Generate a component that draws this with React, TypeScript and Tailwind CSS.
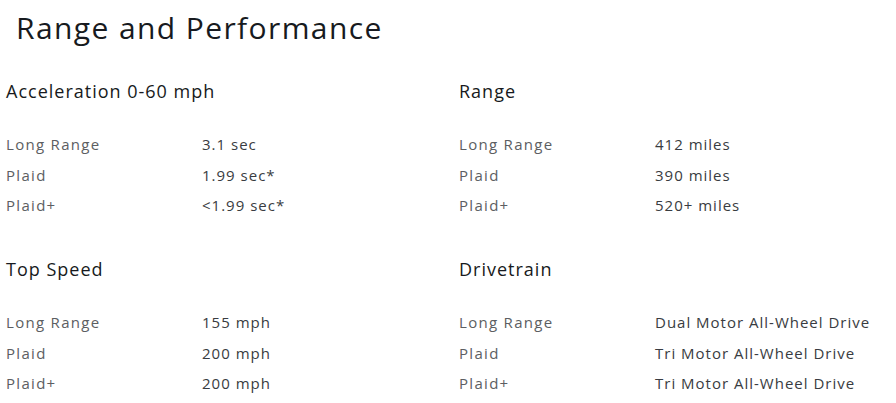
const sections = [
  {
    title: "Acceleration 0-60 mph",
    rows: [
      ["Long Range", "3.1 sec"],
      ["Plaid", "1.99 sec*"],
      ["Plaid+", "<1.99 sec*"],
    ],
  },
  {
    title: "Range",
    rows: [
      ["Long Range", "412 miles"],
      ["Plaid", "390 miles"],
      ["Plaid+", "520+ miles"],
    ],
  },
  {
    title: "Top Speed",
    rows: [
      ["Long Range", "155 mph"],
      ["Plaid", "200 mph"],
      ["Plaid+", "200 mph"],
    ],
  },
  {
    title: "Drivetrain",
    rows: [
      ["Long Range", "Dual Motor All-Wheel Drive"],
      ["Plaid", "Tri Motor All-Wheel Drive"],
      ["Plaid+", "Tri Motor All-Wheel Drive"],
    ],
  },
]

function SpecBlock({ title, rows }: { title: string; rows: string[][] }) {
  return (
    <div className="h-[178px]">
      <h3 className="h-[24px] text-[18px] leading-[24px] text-[#171a20] tracking-[1px]">{title}</h3>
      <div className="mt-[26px]">
        {rows.map(([label, value]) => (
          <div key={label} className="flex h-[30.5px] items-center text-[15px]">
            <span className="w-[196px] text-[#5c5e62] tracking-[1.3px]">{label}</span>
            <span className="text-[#393c41] tracking-[1px]">{value}</span>
          </div>
        ))}
      </div>
    </div>
  )
}

export default function App() {
  return (
    <div className="w-[896px] h-[403px] overflow-hidden bg-white font-['Open_Sans',sans-serif]">
      <h2 className="pl-[16px] pt-[8px] h-[79px] text-[30px] leading-[40px] text-[#171a20] tracking-[1.4px]">
        Range and Performance
      </h2>
      <div className="grid grid-cols-[453px_1fr] pl-[6px]">
        {sections.map((s) => (
          <SpecBlock key={s.title} title={s.title} rows={s.rows} />
        ))}
      </div>
    </div>
  )
}
